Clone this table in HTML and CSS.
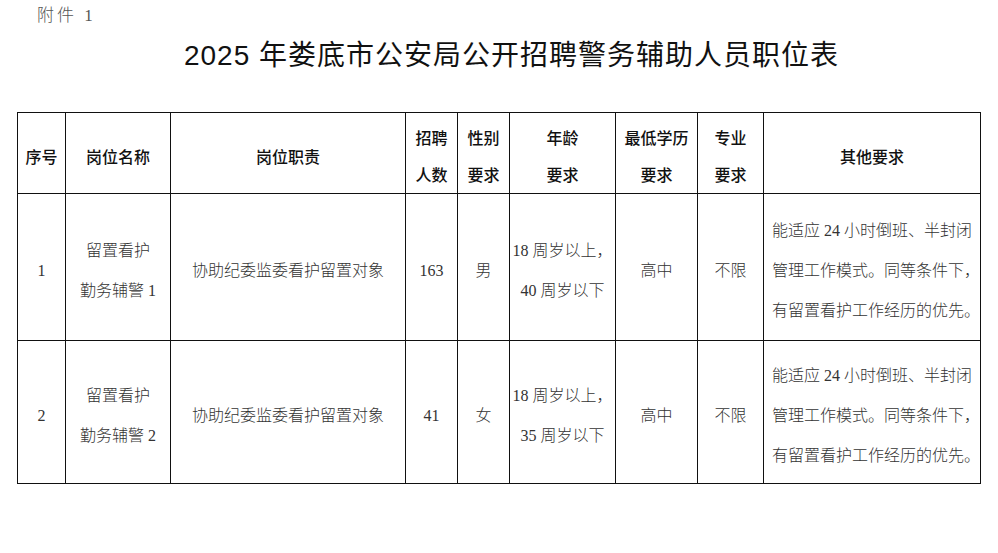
FILE: index.html
```html
<!DOCTYPE html>
<html lang="zh-CN">
<head>
<meta charset="utf-8">
<link rel="stylesheet" href="styles.css">
</head>
<body>
<div class="page">
  <div class="annex">附件 1</div>
  <h1 class="title">2025 年娄底市公安局公开招聘警务辅助人员职位表</h1>
  <table class="jobs">
    <colgroup>
      <col class="c1"><col class="c2"><col class="c3"><col class="c4"><col class="c5"><col class="c6"><col class="c7"><col class="c8"><col class="c9">
    </colgroup>
    <thead>
      <tr class="head">
        <th>序号</th>
        <th>岗位名称</th>
        <th>岗位职责</th>
        <th>招聘<br>人数</th>
        <th>性别<br>要求</th>
        <th>年龄<br>要求</th>
        <th>最低学历<br>要求</th>
        <th>专业<br>要求</th>
        <th>其他要求</th>
      </tr>
    </thead>
    <tbody>
      <tr class="r1">
        <td>1</td>
        <td>留置看护<br>勤务辅警 1</td>
        <td>协助纪委监委看护留置对象</td>
        <td>163</td>
        <td>男</td>
        <td>18 周岁以上，<br>40 周岁以下</td>
        <td>高中</td>
        <td>不限</td>
        <td class="other">能适应 24 小时倒班、半封闭<br>管理工作模式。同等条件下，<br>有留置看护工作经历的优先。</td>
      </tr>
      <tr class="r2">
        <td>2</td>
        <td>留置看护<br>勤务辅警 2</td>
        <td>协助纪委监委看护留置对象</td>
        <td>41</td>
        <td>女</td>
        <td>18 周岁以上，<br>35 周岁以下</td>
        <td>高中</td>
        <td>不限</td>
        <td class="other">能适应 24 小时倒班、半封闭<br>管理工作模式。同等条件下，<br>有留置看护工作经历的优先。</td>
      </tr>
    </tbody>
  </table>
</div>
</body>
</html>
```

FILE: styles.css
```css
html, body {
  margin: 0;
  padding: 0;
  background: #fff;
}
.page {
  padding: 6px 0 0 17px;
  width: 963px;
}
.annex {
  margin-left: 20px;
  font-family: "Liberation Serif", "Noto Sans CJK SC", serif;
  font-size: 17px;
  font-weight: 300;
  letter-spacing: 3px;
  color: #555;
  line-height: 20px;
}
.title {
  margin: 10px 0 0 0;
  padding-left: 26px;
  text-align: center;
  font-family: "Liberation Sans", "Noto Sans CJK SC", sans-serif;
  font-weight: 400;
  font-size: 28px;
  line-height: 40px;
  letter-spacing: 1px;
  color: #111;
}
.jobs {
  margin-top: 36px;
  border-collapse: collapse;
  table-layout: fixed;
  width: 963px;
}
.c1 { width: 48px; }
.c2 { width: 105px; }
.c3 { width: 235px; }
.c4 { width: 52px; }
.c5 { width: 52px; }
.c6 { width: 106px; }
.c7 { width: 82px; }
.c8 { width: 66px; }
.c9 { width: 217px; }
.jobs th, .jobs td {
  border: 1px solid #111;
  padding: 8px 0 0 0;
  text-align: center;
  vertical-align: middle;
  font-size: 16px;
  line-height: 40px;
}
.jobs th {
  padding-top: 6px;
  line-height: 37px;
  font-family: "Noto Sans CJK SC", sans-serif;
  font-weight: 500;
  color: #111;
}
.jobs td {
  font-family: "Liberation Serif", "Noto Sans CJK SC", serif;
  font-weight: 300;
  color: #333;
}
.head { height: 81px; }
.r1 { height: 147px; }
.r2 { height: 143px; }
.jobs td.other {
  text-align: left;
  padding-left: 8px;
  white-space: nowrap;
}
```
